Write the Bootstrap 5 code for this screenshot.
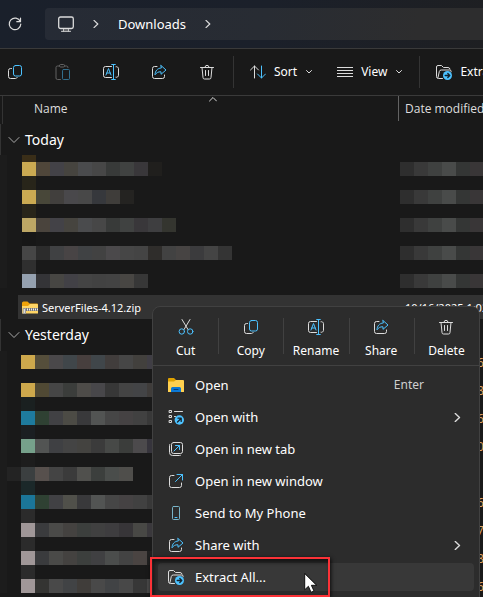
<!DOCTYPE html>
<html lang="en" data-bs-theme="dark">
<head>
<meta charset="utf-8">
<meta name="viewport" content="width=device-width, initial-scale=1">
<title>Downloads</title>
<link href="https://cdn.jsdelivr.net/npm/bootstrap@5.3.0/dist/css/bootstrap.min.css" rel="stylesheet">
<style>
  body { font-family: "Noto Sans", "Open Sans", sans-serif; font-size: 13px; line-height: 20px; color: #fff; background: #191919; }
  svg { display: block; flex: none; fill: none; stroke: #dcdcdc; stroke-width: 1; stroke-linecap: round; stroke-linejoin: round; }
  .ic { width: 16px; height: 16px; }
  .chev { width: 8px; height: 8px; }
  .blue { stroke: #4cc2ff; }
  .plain { border: 0; background: none; color: #fff; padding: 0; text-align: left; white-space: nowrap; }
  .explorer { min-height: 100vh; }
  .titlebar { height: 49px; padding-left: 7px; border-bottom: 1px solid #3a3a3a; background: linear-gradient(100deg, #1a202b, #1b202a 55%, #1e1f22); }
  .address { height: 32px; gap: 18px; margin-left: 22px; padding-left: 13px; border-radius: 4px 0 0 4px; background: linear-gradient(100deg, #262b35, #282c33 50%, #2d2d2e 85%); }
  .tools { height: 47px; padding-left: 7px; border-bottom: 1px solid #3a3a3a; font-size: 12px; }
  .tool-icons { gap: 32px; margin-right: 2px; }
  .vline { width: 1px; height: 32px; background: #343434; flex: none; }
  .split { display: grid; grid-template-columns: 378px 1fr; }
  .heads { height: 28px; border-left: 1px solid #333; margin-left: 2px; font-family: "Open Sans", sans-serif; font-size: 12px; color: #dedede; grid-template-columns: 395px 1fr; }
  .heads-name { padding: 3px 0 0 31px; }
  .heads-date { border-left: 1px solid #636363; height: 25px; padding: 3px 0 0 6px; }
  .sortmark { left: 206px; top: 0; }
  .group-head { height: 32px; margin-left: 2px; padding-left: 7px; gap: 5px; border-left: 1px solid #333; font-size: 14px; }
  .today-head { height: 31px; padding-top: 1px; }
  .mosaic { border-left: 7px solid #1c1c1c; padding-left: 15px; }
  .later { padding-left: 14px; padding-top: 4px; }
  .cells { height: 14px; }
  .cells i, .spacer i { width: 14px; flex: none; }
  .spacer { height: 14px; }
  .short { height: 7px; }
  .early { margin-left: -14px; }
  .sliver { font-size: 12px; line-height: 16px; padding-left: 78px; height: 14px; color: #d8a060; white-space: nowrap; }
  .picked { height: 24px; margin: 7px 0 0 18px; padding: 1px 0 0 4px; background: #333; font-size: 11px; grid-template-columns: 383px 1fr; }
  .ctx { left: 152px; right: 3px; top: 306px; bottom: -12px; background: #2c2c2c; border: 1px solid #414141; border-radius: 8px; }
  .commands { height: 59px; border-bottom: 1px solid #414141; font-size: 12px; }
  .commands button { padding: 12px 0 6px; line-height: 16px; text-align: center; }
  .commands .vline { height: 36px; margin-top: 11px; margin-right: -1px; background: #414141; }
  .entries { padding: 3px 5px 0; }
  .entries button { height: 32px; padding-left: 10px; padding-right: 12px; border-radius: 4px; }
  .entries .ic { margin-right: 11px; }
  .entries .chev { width: 9px; height: 9px; }
  .entries .hint { font-size: 12px; color: #cfcfcf; margin-right: 38px; }
  .entries .hot { height: 28px; margin-top: 2px; background: #383838; }
  .frame { left: 150px; top: 557px; width: 180px; height: 40px; border: 2px solid #fb3237; box-shadow: inset 2px 3px 4px #0009, 1px 1px 4px #000c; pointer-events: none; }
  .cursor { left: 304px; top: 573px; width: 13px; height: 21px; }
</style>
</head>
<body>
<svg class="d-none" aria-hidden="true">
  <symbol id="copy" viewBox="0 0 16 16"><rect class="blue" x="6.500" y="1.500" width="8" height="10.500" rx="2"/><path d="M4.500 4.500H3.500a2 2 0 0 0-2 2v6a2 2 0 0 0 2 2h5a2 2 0 0 0 1.700-1"/></symbol>
  <symbol id="rename" viewBox="0 0 16 16"><path d="M8.500 2.500h-6a2 2 0 0 0-2 2v7a2 2 0 0 0 2 2h6M13 2.700a2 2 0 0 1 2.500 2v6.600a2 2 0 0 1-2.500 2"/><path class="blue" d="M3 11l2.500-6.500L8 11M3.800 9h3.400M10.500.5v15M8.700.5h3.600M8.700 15.500h3.600"/></symbol>
  <symbol id="share" viewBox="0 0 16 16"><path d="M6 2.500H3.500a2 2 0 0 0-2 2v8a2 2 0 0 0 2 2h8a2 2 0 0 0 2-2v-1.500"/><path class="blue" d="M10 1.500l5 4.500-5 4.300V7.800C7 7.600 5.500 8.800 4 10.800 4.200 7 6.200 4.300 10 4z"/></symbol>
  <symbol id="bin" viewBox="0 0 16 16"><path d="M1.500 3.500h13M3 3.500l1 10a1.500 1.500 0 0 0 1.500 1.500h5a1.500 1.500 0 0 0 1.500-1.500l1-10M6 3.300a2 2 0 0 1 4 0M6.500 6.500v5M9.500 6.500v5"/></symbol>
  <symbol id="extract" viewBox="0 0 16 16"><path d="M6.500 14.500H2.500a2 2 0 0 1-2-2V3a1.500 1.500 0 0 1 1.500-1.500h3.500l2 2h4.500a2 2 0 0 1 2 1.500M2 13.500l1.300-6a2 2 0 0 1 2-1.500h8.200a1.500 1.500 0 0 1 1.700 1.500"/><circle cx="11.500" cy="11.500" r="4.500" fill="#4cc2ff" stroke="none"/><path stroke="#14232c" stroke-width="1.300" d="M9.200 11.500h4.300M11.800 9.500l2 2-2 2"/></symbol>
  <symbol id="right" viewBox="0 0 8 8"><path stroke-width="1.200" d="M2 .4L5.800 4 2 7.600"/></symbol>
  <symbol id="down" viewBox="0 0 8 8"><path d="M1.500 2.500L4 5l2.500-2.500"/></symbol>
</svg>

<div class="explorer position-relative overflow-hidden">
  <header class="titlebar d-flex align-items-center">
    <button class="plain" aria-label="Refresh"><svg class="ic" viewBox="0 0 16 16"><path stroke-width="1.200" d="M13.300 5.500A5.800 5.800 0 1 0 13.800 8M13.500 2v3.700H9.800"/></svg></button>
    <nav class="address flex-grow-1 d-flex align-items-center" aria-label="Location">
      <a href="#" aria-label="This PC"><svg class="ic" viewBox="0 0 16 16"><rect x=".7" y="1" width="14.600" height="11.500" rx="1.800" stroke-width="1.300"/><path d="M5.500 12.500v2.500M10.500 12.500v2.500M3.500 15.300h9"/><path stroke="#888" d="M5.800 14h4.500"/></svg></a>
      <svg class="chev" viewBox="0 0 8 8"><use href="#right"/></svg>
      <a href="#" class="text-white text-decoration-none">Downloads</a>
      <svg class="chev" viewBox="0 0 8 8"><use href="#right"/></svg>
    </nav>
  </header>

  <div class="tools d-flex align-items-center overflow-hidden" role="toolbar" aria-label="Commands">
    <div class="tool-icons d-flex">
      <button class="plain" aria-label="Copy"><svg class="ic"><use href="#copy"/></svg></button>
      <button class="plain" aria-label="Paste" disabled><svg class="ic opacity-50" viewBox="0 0 16 16"><path stroke="#aaa" d="M5.500 15.500h-3a1.500 1.500 0 0 1-1.500-1.500V3.500A1.500 1.500 0 0 1 2.500 2h2M9.500 2h2A1.500 1.500 0 0 1 13 3.500M4.500 1.500a1 1 0 0 1 1-1h3a1 1 0 0 1 1 1v.5a1 1 0 0 1-1 1h-3a1 1 0 0 1-1-1z"/><rect class="blue" x="7.500" y="5.500" width="7" height="10" rx="1"/></svg></button>
      <button class="plain" aria-label="Rename"><svg class="ic"><use href="#rename"/></svg></button>
      <button class="plain" aria-label="Share"><svg class="ic"><use href="#share"/></svg></button>
      <button class="plain" aria-label="Delete"><svg class="ic"><use href="#bin"/></svg></button>
    </div>
    <span class="vline ms-3 me-3"></span>
    <button class="plain d-flex align-items-center gap-2"><svg class="ic" viewBox="0 0 16 16"><path d="M4.500 14V2M.5 6l4-4 4 4"/><path class="blue" d="M11.500 2v12M7.500 10l4 4 4-4"/></svg>Sort<svg class="chev"><use href="#down"/></svg></button>
    <button class="plain d-flex align-items-center gap-2 ms-4"><svg class="ic" viewBox="0 0 16 16"><path stroke-linecap="butt" d="M0 3.500h16M0 6.500h16M0 9.500h16M0 12.500h16"/></svg>View<svg class="chev"><use href="#down"/></svg></button>
    <span class="vline ms-3 me-3"></span>
    <button class="plain d-flex align-items-center gap-2"><svg class="ic"><use href="#extract"/></svg>Extract all</button>
  </div>

  <div class="heads split position-relative">
    <svg class="chev sortmark position-absolute" viewBox="0 0 8 8"><path d="M.5 5L4 1.500 7.500 5"/></svg>
    <div class="heads-name">Name</div>
    <div class="heads-date text-nowrap">Date modified</div>
  </div>

  <main>
    <h2 class="group-head today-head d-flex align-items-center m-0 fw-normal"><svg width="12" height="8" viewBox="0 0 12 8"><path stroke="#aaa" d="M1 1.500l5 5 5-5"/></svg>Today</h2>
    <div class="mosaic" id="today"></div>
    <div class="picked split align-items-center">
      <div class="d-flex align-items-center gap-1">
        <svg class="ic" viewBox="0 0 16 16"><path fill="#f0a30a" stroke="none" d="M0 3a1.500 1.500 0 0 1 1.500-1.500h4l2 2H15a1 1 0 0 1 1 1V8H0z"/><path fill="#ffd565" stroke="none" d="M0 6h6l2-2h7a1 1 0 0 1 1 1v8.500H0z"/><path stroke="#777" stroke-width="3" stroke-linecap="butt" d="M3 9.500h13"/><path stroke="#eee" stroke-width="2" stroke-linecap="butt" stroke-dasharray="1 1" d="M3 9.500h13"/><rect x="1.500" y="8.500" width="2" height="5" fill="#ddd" stroke="#999"/></svg>
        <span>ServerFiles-4.12.zip</span>
      </div>
      <span class="text-nowrap">10/16/2025 1:02 PM</span>
    </div>
    <h2 class="group-head d-flex align-items-center m-0 fw-normal"><svg width="12" height="8" viewBox="0 0 12 8"><path stroke="#aaa" d="M1 1.500l5 5 5-5"/></svg>Yesterday</h2>
    <div class="mosaic later" id="yesterday"></div>
  </main>

  <div class="ctx position-absolute" role="menu">
    <div class="commands d-flex">
      <button class="plain flex-fill w-100 d-flex flex-column align-items-center justify-content-between"><svg class="ic" viewBox="0 0 16 16"><path d="M4 .5l6 10M12 .5l-6 10"/><g class="blue"><circle cx="3.800" cy="12.500" r="2.700"/><circle cx="12.200" cy="12.500" r="2.700"/></g></svg>Cut</button>
      <span class="vline"></span>
      <button class="plain flex-fill w-100 d-flex flex-column align-items-center justify-content-between"><svg class="ic"><use href="#copy"/></svg>Copy</button>
      <span class="vline"></span>
      <button class="plain flex-fill w-100 d-flex flex-column align-items-center justify-content-between"><svg class="ic"><use href="#rename"/></svg>Rename</button>
      <span class="vline"></span>
      <button class="plain flex-fill w-100 d-flex flex-column align-items-center justify-content-between"><svg class="ic"><use href="#share"/></svg>Share</button>
      <span class="vline"></span>
      <button class="plain flex-fill w-100 d-flex flex-column align-items-center justify-content-between"><svg class="ic"><use href="#bin"/></svg>Delete</button>
    </div>
    <div class="entries d-flex flex-column">
      <button class="plain d-flex align-items-center"><svg class="ic" viewBox="0 0 16 16"><path fill="#e0a200" stroke="none" d="M0 2a1 1 0 0 1 1-1h5l2 2v2H0z"/><path fill="#ffd04f" stroke="none" d="M0 4.500h6L8 3h7a1 1 0 0 1 1 1v11H0z"/><path fill="#0c78d4" stroke="none" d="M3 15v-3.500A1.500 1.500 0 0 1 4.500 10h7a1.500 1.500 0 0 1 1.500 1.500V15z"/><path stroke="#06417c" d="M6 12.500h4"/></svg>Open<span class="hint ms-auto">Enter</span></button>
      <button class="plain d-flex align-items-center"><svg class="ic" viewBox="0 0 16 16"><path d="M1.500 1.500h2v2h-2zM1.500 6.500h2v2h-2zM1.500 11.500h2v2h-2zM6.500 2.500h8M6.500 7.500h1"/><circle cx="11.300" cy="11" r="4.700" fill="#4cc2ff" stroke="none"/><path stroke="#14232c" stroke-width="1.300" d="M9.500 13l3.500-3.500M10 9.200h3.200v3.200"/></svg>Open with<svg class="chev ms-auto"><use href="#right"/></svg></button>
      <button class="plain d-flex align-items-center"><svg class="ic" viewBox="0 0 16 16"><rect x="3.500" y="1.500" width="11" height="11" rx="2"/><path d="M1.700 3.500a2 2 0 0 0-.2 1v7a3 3 0 0 0 3 3h7a2 2 0 0 0 1-.2"/><path class="blue" d="M6 10l5.500-5.500M7.500 4.500h4v4"/></svg>Open in new tab</button>
      <button class="plain d-flex align-items-center"><svg class="ic" viewBox="0 0 16 16"><path d="M6 2.500H3.500a2 2 0 0 0-2 2v8a2 2 0 0 0 2 2h8a2 2 0 0 0 2-2V10"/><path class="blue" d="M7.500 8.500l7-7M9 1.500h5.500V7"/></svg>Open in new window</button>
      <button class="plain d-flex align-items-center"><svg class="ic" viewBox="0 0 16 16"><rect x="4.500" y="1.500" width="7" height="13" rx="1" stroke="#78b4c8"/><path stroke="#4cc2ff" d="M7 12.500h2"/></svg>Send to My Phone</button>
      <button class="plain d-flex align-items-center"><svg class="ic"><use href="#share"/></svg>Share with<svg class="chev ms-auto"><use href="#right"/></svg></button>
      <button class="plain hot d-flex align-items-center"><svg class="ic"><use href="#extract"/></svg>Extract All...</button>
    </div>
  </div>
  <div class="frame position-absolute"></div>
  <svg class="cursor position-absolute" viewBox="0 0 13 21"><path fill="#fff" stroke="#111" d="M.7.8v16l3.700-3.500 2.600 6 3-1.300-2.600-5.700h4.900z"/></svg>
</div>

<script src="https://cdn.jsdelivr.net/npm/bootstrap@5.3.0/dist/js/bootstrap.bundle.min.js"></script>
<script>
  const dates = '2e2e2e 393939 3f4140 494b4a 343635 393637';
  // Each entry: tint above the row, then the colours of its blocks.
  const today = [
    ['3a2e18', 'cbaa52 4f463a 434247 46443f 4a4b4d 474747 383a39 404241 39373a 201f1d'],
    ['28251a', 'cbaa52 484739 413f3d 49484b 484848 36383c 3f3d3a 242321'],
    ['28251a', 'bda765 4a443d 434247 46443f 4a4b4d 474747 383a39 404241 39373a 3e3e40 34352f'],
    ['171717', '464646 2c2c2c 404143 484445 404244 424242 4b494b 464646 444444 2f2d2b 424242 474443 3b3b3d 444444 343434'],
    ['2f2f2f', '95a1b0 343437 474643 424146 444444 424242 434343 484643 373737']
  ];
  const yesterday = [
    ['', 'cda84c 554e3b 4a484a 40464a 473f3e 40464a 413d3c 464646 42403d 403e45'],
    ['191919', 'cda84c 504934 464646 3b3d3b 4e4c49 48474a 373737 444444 434446 3f3c3a'],
    ['1a2020', '1e7b9e 2f4133 414144 4c4b45 39393b 525453 464646 454243 414141 383838'],
    ['1b1f22', '76a18b 525453 3f4043 444444 444340 3b3b3b 474947 3b3d3b 4c4a4c 36343c'],
    ['1d1d1d', '232323 3b3f40 57504d 444444 3b3b3b 50504d 3c3f3d 4a4d4b 4f4e4b'],
    ['1b2829', '1b7698 2f4133 414144 50504a 39393b 525453 464646 454243 414141 383838'],
    ['2b2b2b', 'a09798 3a3b3d 4a4a48 444240 3c3f3d 404040 3e3d3f 373538 484845 3a383c'],
    ['2b2b2b', 'a09798 3a3b3d 4a4a48 444240 3c3f3d 404042 4b4d4c 434343 4a4442 202020'],
    ['2b2b2b', 'a09798 343432 494949 414345 403d3a 494949 414345 484848 373737 484848']
  ];
  const times = ['6', '8', '6', '0', '', '6', '7', '8', '6'];
  const blocks = list => list.split(' ').map(c => `<i style="background:#${c}"></i>`).join('');
  const draw = (id, rows, dateCell) => {
    document.getElementById(id).innerHTML = rows.map(([tint, list], n) =>
      (tint ? `<div class="spacer d-flex ${id === 'today' && !n ? 'short' : ''}">${blocks(tint)}</div>` : '') +
      `<div class="split"><div class="cells d-flex ${list.startsWith('232323') ? 'early' : ''}">${blocks(list)}</div>${dateCell(n)}</div>`
    ).join('');
  };
  draw('today', today, () => `<div class="cells d-flex overflow-hidden">${blocks(dates)}</div>`);
  draw('yesterday', yesterday, n => `<div class="sliver overflow-hidden">${times[n]}</div>`);
</script>
</body>
</html>
